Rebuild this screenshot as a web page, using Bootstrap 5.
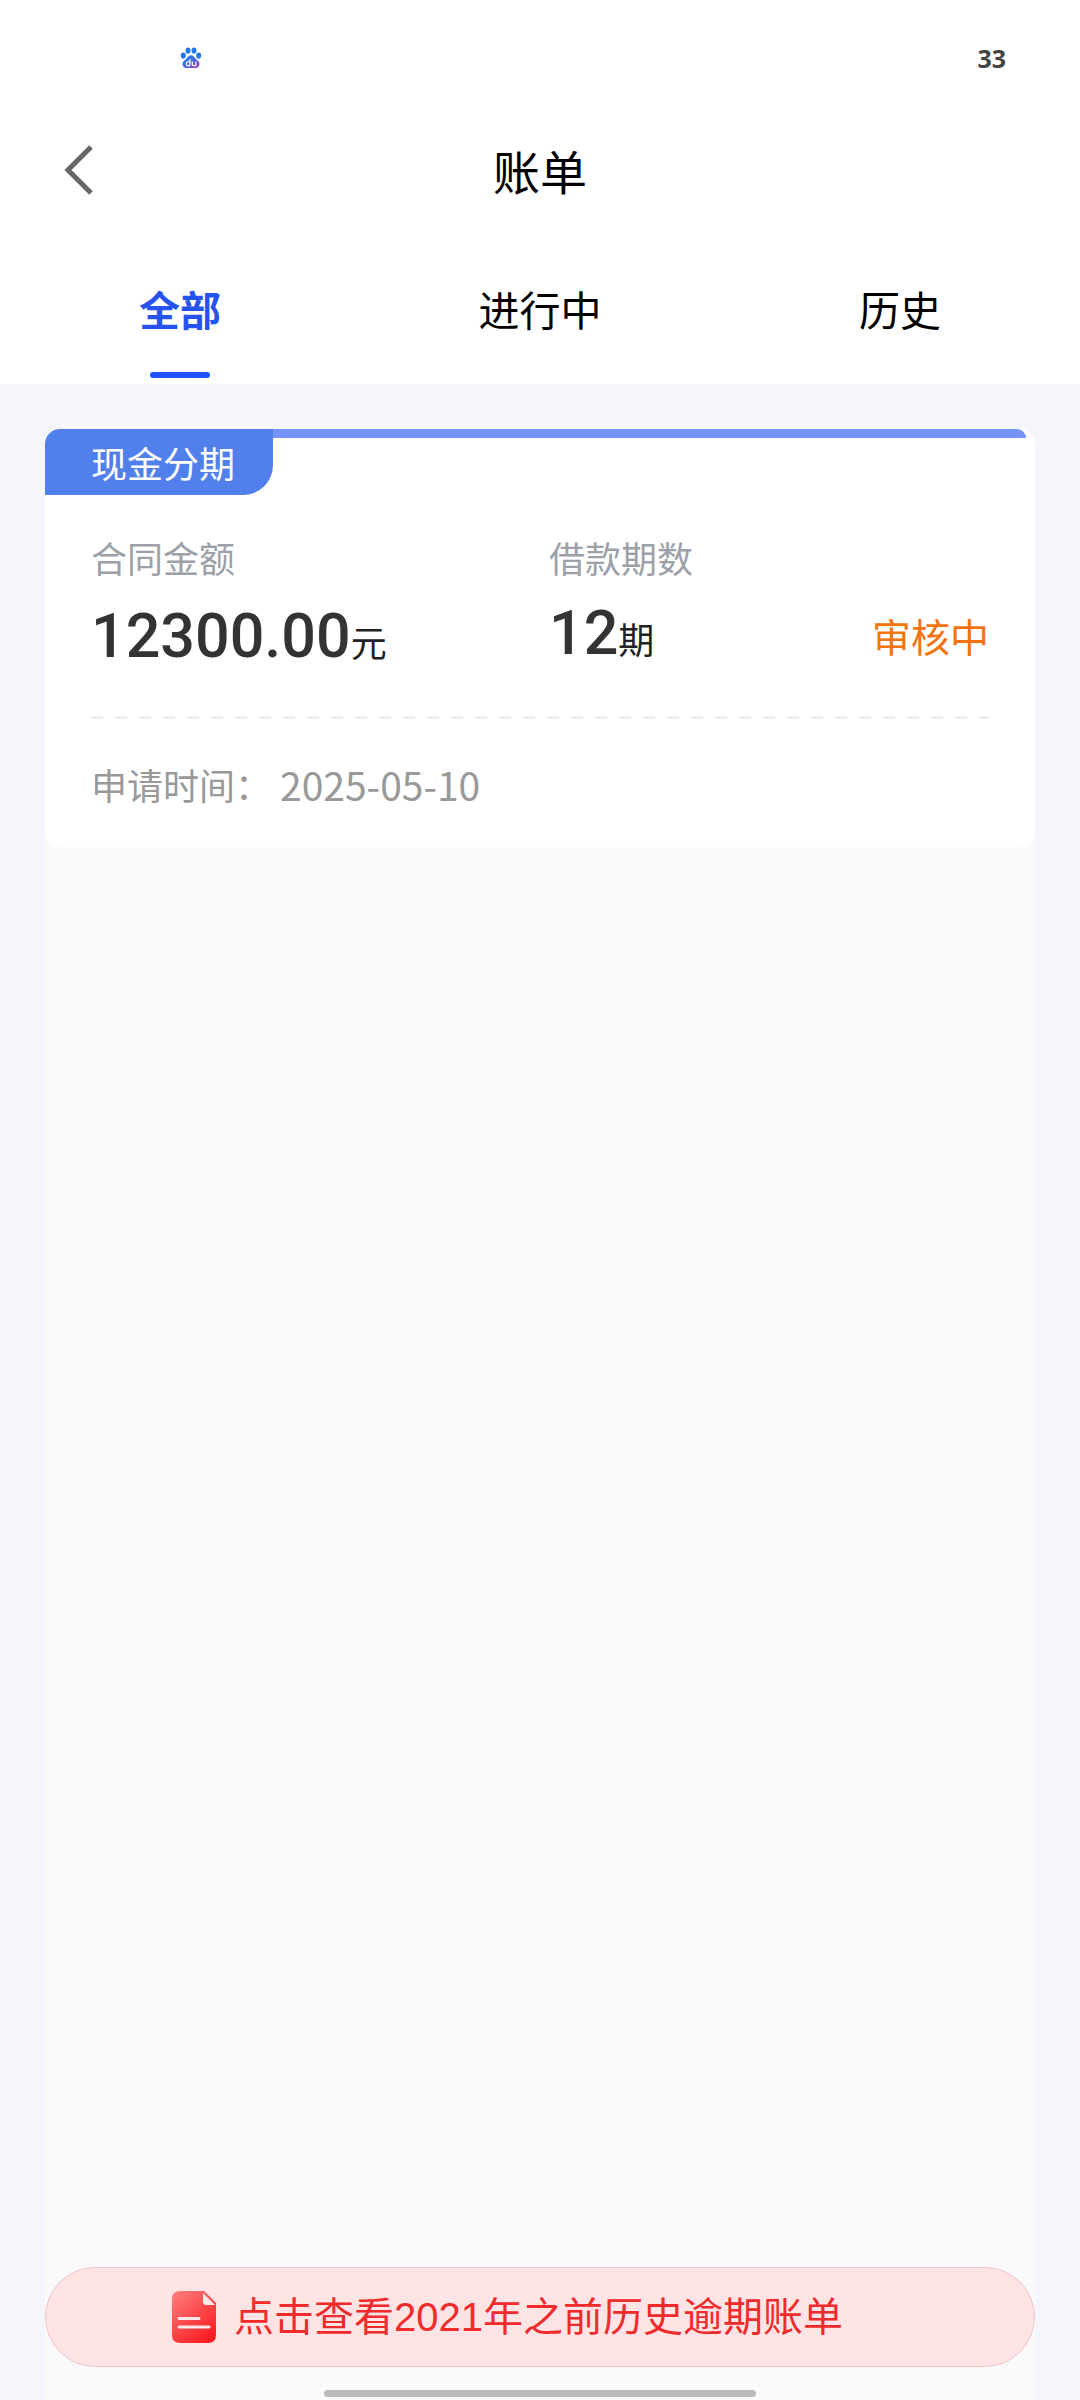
<!DOCTYPE html>
<html lang="zh-CN">
<head>
<meta charset="utf-8">
<meta name="viewport" content="width=device-width, initial-scale=1">
<title>账单</title>
<link href="https://cdn.jsdelivr.net/npm/bootstrap@5.3.0/dist/css/bootstrap.min.css" rel="stylesheet">
<style>
  body { font-family: "Noto Sans CJK SC", sans-serif; background: #f4f6fc; color: #000; }
  .status-strip { height: 116px; padding: 0 74px 0 180px; }
  .battery-level { font-family: "Noto Sans", sans-serif; font-size: 25px; line-height: 36px; color: #444; }
  .app-bar { height: 108px; padding: 0 63px; }
  .app-bar .back-btn, .app-bar .back-space { width: 30px; }
  .app-title { font-size: 47px; line-height: 60px; }
  .bill-tabs .nav-link { padding: 54px 0 6px; font-size: 41px; line-height: 60px; color: #000; }
  .bill-tabs .nav-link::after { content: ""; display: block; width: 60px; height: 6px; margin: 34px auto 0; border-radius: 3px; }
  .bill-tabs .nav-link.active { color: #2653f0; font-weight: 700; }
  .bill-tabs .nav-link.active::after { background: #1f53ff; }
  .page-main { padding: 45px 45px 0; }
  .bill-panel { background: #fafafa; border-radius: 15px 15px 0 0; }
  .bill-card { border-radius: 15px; }
  .bill-kind { background: #517fec; padding: 0 38px 0 46px; font-size: 36px; line-height: 66px; border-radius: 0 0 30px 0; }
  .bill-stripe { height: 9px; margin-right: 9px; background: #7592fd; border-radius: 0 9px 0 0; }
  .bill-body { padding: 40px 46px 41px; }
  .amount-col { flex: 0 0 51%; }
  .field-label { font-size: 36px; line-height: 44px; color: #9ca0a8; }
  .field-value { margin-top: 18px; font-family: Roboto, "Noto Sans CJK SC", sans-serif; font-size: 61px; line-height: 78px; font-weight: 500; color: #333; }
  .term-col .field-value { margin-top: 15px; }
  .field-unit { font-family: "Noto Sans CJK SC", sans-serif; font-size: 36px; line-height: 36px; font-weight: 400; color: #222; }
  .bill-state { font-size: 39px; line-height: 80px; color: #f5730f; }
  .dash-line { height: 3px; margin: 41px 0 43px; background: repeating-linear-gradient(90deg, #eeeef1 0 12px, transparent 12px 24px); }
  .apply-row { font-size: 36px; line-height: 44px; color: #999; gap: 9px; }
  .apply-date { font-size: 39px; }
  .overdue-link { height: 100px; padding: 0 126px; gap: 18px; background: #ffe4e6; border: 1px solid #f0c4c9; color: #f02b2b; font-family: "Liberation Sans", "Noto Sans CJK SC", sans-serif; font-size: 40px; line-height: 60px; }
  .overdue-link:hover { color: #f02b2b; }
  .home-handle { width: 432px; height: 7px; margin: 23px auto 3px; background: #bbb; }
</style>
</head>
<body>
<div class="d-flex flex-column min-vh-100">
  <header class="bg-white">
    <div class="status-strip d-flex align-items-center justify-content-between">
      <svg width="22" height="22" viewBox="0 0 22 22" aria-hidden="true">
        <defs><linearGradient id="paw" x1="0" y1="0" x2="1" y2="1"><stop offset=".3" stop-color="#2878f0"/><stop offset="1" stop-color="#a83cc0"/></linearGradient></defs>
        <g fill="#2478ee">
          <ellipse cx="3.3" cy="8.6" rx="2.5" ry="3.1"/><ellipse cx="8" cy="3.6" rx="2.5" ry="3.1"/>
          <ellipse cx="14" cy="3.6" rx="2.5" ry="3.1"/><ellipse cx="18.7" cy="8.6" rx="2.5" ry="3.1"/>
        </g>
        <path d="M11 8.200c2.400 0 3.300 2 5 3.800 1.700 1.700 3.700 2.700 3.500 5.200-.2 2.400-2.300 4-4.700 4-1.500 0-2.300-.1-3.800-.1s-2.300.1-3.800.1c-2.400 0-4.500-1.600-4.700-4C2.300 14.700 4.300 13.700 6 12c1.700-1.800 2.600-3.800 5-3.800z" fill="url(#paw)"/>
        <path d="M10 12v6.600M10 14.800H7.800c-2 0-2 3.800 0 3.800H10M12.300 14.500v3q0 1.100 1.200 1.100h2.300v-4.100" fill="none" stroke="#fff" stroke-width="1.200"/>
      </svg>
      <span class="battery-level fw-bold">33</span>
    </div>
    <div class="app-bar d-flex align-items-center justify-content-between">
      <button type="button" class="back-btn btn border-0 p-0 d-flex" aria-label="返回">
        <svg width="30" height="52" viewBox="0 0 30 52" fill="none" stroke="#666" stroke-width="5"><path d="M28 3 5 26l23 23"/></svg>
      </button>
      <h1 class="app-title fw-normal m-0">账单</h1>
      <span class="back-space"></span>
    </div>
    <nav class="bill-tabs nav nav-fill">
      <a class="nav-link active col-4" aria-current="page" href="#all">全部</a>
      <a class="nav-link col-4" href="#ongoing">进行中</a>
      <a class="nav-link col-4" href="#history">历史</a>
    </nav>
  </header>
  <main class="page-main d-flex flex-column flex-grow-1">
    <div class="bill-panel d-flex flex-column flex-grow-1">
      <article class="bill-card bg-white overflow-hidden">
        <div class="d-flex align-items-start">
          <span class="bill-kind text-white">现金分期</span>
          <span class="bill-stripe flex-grow-1"></span>
        </div>
        <div class="bill-body">
          <div class="d-flex">
            <div class="amount-col">
              <div class="field-label">合同金额</div>
              <div class="field-value">12300.00<span class="field-unit">元</span></div>
            </div>
            <div class="term-col">
              <div class="field-label">借款期数</div>
              <div class="field-value">12<span class="field-unit">期</span></div>
            </div>
            <div class="bill-state ms-auto align-self-end">审核中</div>
          </div>
          <div class="dash-line"></div>
          <div class="apply-row d-flex">
            <span>申请时间：</span><span class="apply-date">2025-05-10</span>
          </div>
        </div>
      </article>
      <footer class="mt-auto">
        <a class="overdue-link d-flex align-items-center rounded-pill text-decoration-none" href="#overdue">
          <svg width="44" height="52" viewBox="0 0 44 52" aria-hidden="true">
            <defs><linearGradient id="doc" x1="0" y1="0" x2=".7" y2="1"><stop offset="0" stop-color="#ff8080"/><stop offset="1" stop-color="#fb1e22"/></linearGradient></defs>
            <path d="M8 0h24l12 12v32q0 8-8 8H8q-8 0-8-8V8q0-8 8-8z" fill="url(#doc)"/>
            <path d="M31 2v9q0 3 3 3h9z" fill="#ffe9ea"/>
            <path d="M7 27.500h20M7 36h30" stroke="#ffe9ea" stroke-width="3" stroke-linecap="round"/>
          </svg>
          <span>点击查看2021年之前历史逾期账单</span>
        </a>
        <div class="home-handle rounded-pill"></div>
      </footer>
    </div>
  </main>
</div>
<script src="https://cdn.jsdelivr.net/npm/bootstrap@5.3.0/dist/js/bootstrap.bundle.min.js"></script>
</body>
</html>
